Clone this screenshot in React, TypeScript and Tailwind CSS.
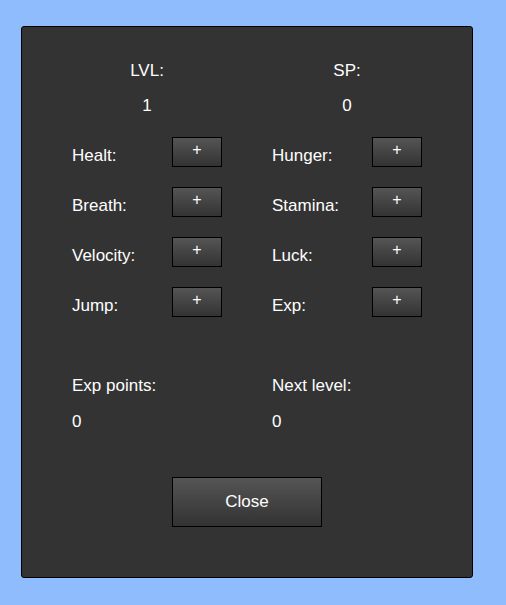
import React from 'react';

const stats = [
  ['Healt:', 'Hunger:'],
  ['Breath:', 'Stamina:'],
  ['Velocity:', 'Luck:'],
  ['Jump:', 'Exp:'],
];

function PlusButton() {
  return (
    <button className="w-[50px] h-[30px] border border-black bg-gradient-to-b from-[#555555] to-[#333333] text-white text-[16px] leading-none pb-[4px]">
      +
    </button>
  );
}

function StatCell({ label }: { label: string }) {
  return (
    <div className="flex items-center h-[50px]">
      <span className="w-[100px] pt-[7px]">{label}</span>
      <PlusButton />
    </div>
  );
}

export default function App() {
  return (
    <div
      className="min-h-screen bg-[#8fbcfd] pt-[26px] pl-[21px] text-white text-[17px] leading-[20px]"
      style={{ fontFamily: '"Liberation Sans", Arial, sans-serif' }}
    >
      <div className="w-[452px] h-[552px] border border-black rounded-[3px] bg-[#333333] px-[50px] pt-[34px]">
        {/* Level / skill points */}
        <div className="grid grid-cols-[200px_200px]">
          <div className="w-[150px] text-center">LVL:</div>
          <div className="w-[150px] text-center">SP:</div>
          <div className="w-[150px] text-center mt-[15px]">1</div>
          <div className="w-[150px] text-center mt-[15px]">0</div>
        </div>

        {/* Stats */}
        <div className="grid grid-cols-[200px_200px] mt-[11px]">
          {stats.map(([left, right]) => (
            <React.Fragment key={left}>
              <StatCell label={left} />
              <StatCell label={right} />
            </React.Fragment>
          ))}
        </div>

        {/* Exp */}
        <div className="grid grid-cols-[200px_200px] mt-[49px]">
          <div>Exp points:</div>
          <div>Next level:</div>
          <div className="mt-[16px]">0</div>
          <div className="mt-[16px]">0</div>
        </div>

        <div className="flex justify-center mt-[45px]">
          <button className="w-[150px] h-[50px] border border-black bg-gradient-to-b from-[#555555] to-[#333333] text-white text-[17px]">
            Close
          </button>
        </div>
      </div>
    </div>
  );
}
